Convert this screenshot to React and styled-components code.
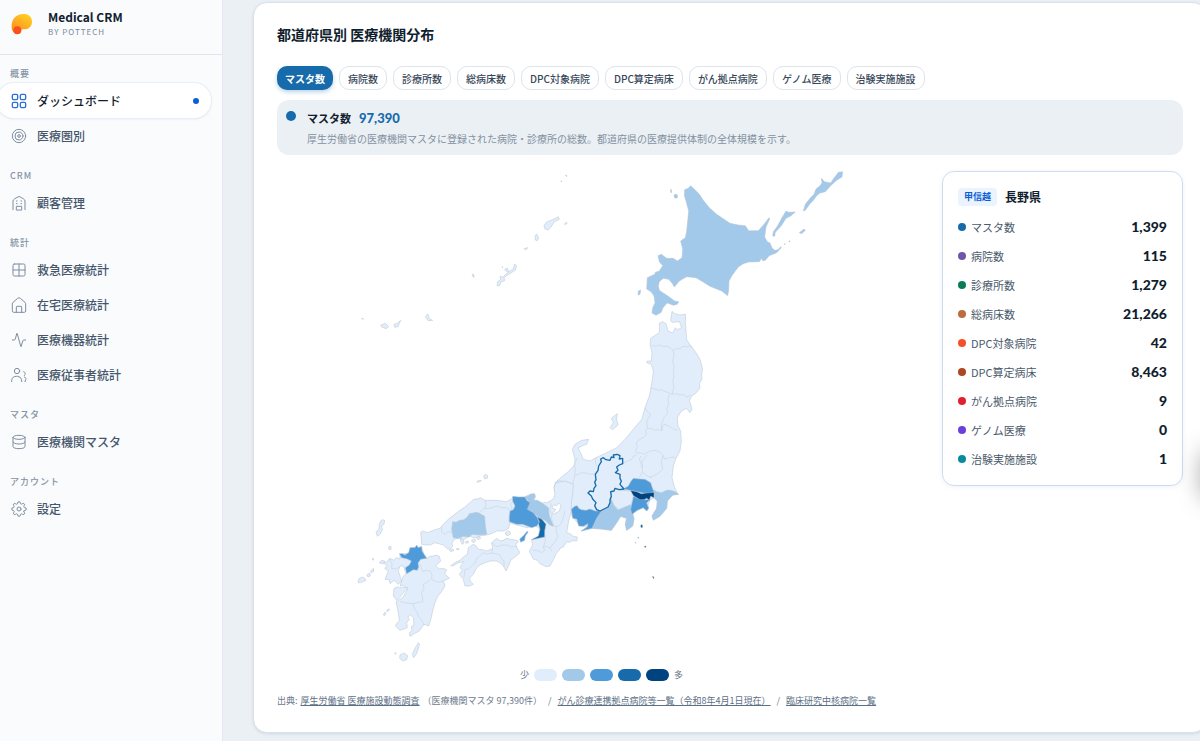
import React, { useState } from 'react'
import styled, { createGlobalStyle } from 'styled-components'
import { Activity, Database, Grid2x2, Target } from 'lucide-react'
import { FiSettings } from 'react-icons/fi'

const levels = ['#e1edfb', '#a3c9ea', '#4f9bda', '#176bab', '#00437f']

const metrics = [
  { name: 'マスタ数', color: '#176bab', value: '1,399' },
  { name: '病院数', color: '#6f56ab', value: '115' },
  { name: '診療所数', color: '#0a7d55', value: '1,279' },
  { name: '総病床数', color: '#bf6b40', value: '21,266' },
  { name: 'DPC対象病院', color: '#f4502a', value: '42' },
  { name: 'DPC算定病床', color: '#ac4722', value: '8,463' },
  { name: 'がん拠点病院', color: '#e01f2f', value: '9' },
  { name: 'ゲノム医療', color: '#6a40d8', value: '0' },
  { name: '治験実施施設', color: '#0b8a9f', value: '1' },
]

// custom icons
const Tiles = () => (
  <svg viewBox='0 0 24 24'>
    <rect x='2' y='2' width='8' height='8' rx='2' />
    <rect x='14' y='2' width='8' height='8' rx='2' />
    <rect x='2' y='14' width='8' height='8' rx='2' />
    <rect x='14' y='14' width='8' height='8' rx='2' />
  </svg>
)
const Home = () => (
  <svg viewBox='0 0 24 24'>
    <path d='M2 10a3 3 0 0 1 1-2l7-6a3 3 0 0 1 4 0l7 6a3 3 0 0 1 1 2v11a2 2 0 0 1-2 2H4a2 2 0 0 1-2-2z' />
    <path d='M8 23v-8a1 1 0 0 1 1-1h6a1 1 0 0 1 1 1v8' />
  </svg>
)
const Building = () => (
  <svg viewBox='0 0 24 24'>
    <path d='M3 22V9a4 4 0 0 1 2-3l5-3a4 4 0 0 1 4 0l5 3a4 4 0 0 1 2 3v13' />
    <path d='M8 22v-5h8v5zM8 9h1M15 9h1M8 13h1M15 13h1' />
  </svg>
)
const People = () => (
  <svg viewBox='0 0 24 24'>
    <circle cx='9' cy='6' r='4' />
    <path d='M1 22v-2a7 7 0 0 1 7-6h2a7 7 0 0 1 6 5v3' />
    <path d='M19 7c3 1 3 4 1 6M20 15c3 1 3 3 2 4l-1 3' />
  </svg>
)

const sections = [
  {
    title: '概要',
    items: [
      { label: 'ダッシュボード', icon: Tiles },
      { label: '医療圏別', icon: Target },
    ],
  },
  { title: 'CRM', items: [{ label: '顧客管理', icon: Building }] },
  {
    title: '統計',
    items: [
      { label: '救急医療統計', icon: Grid2x2 },
      { label: '在宅医療統計', icon: Home },
      { label: '医療機器統計', icon: Activity },
      { label: '医療従事者統計', icon: People },
    ],
  },
  { title: 'マスタ', items: [{ label: '医療機関マスタ', icon: Database }] },
  { title: 'アカウント', items: [{ label: '設定', icon: FiSettings }] },
]

// map sheets: every sheet has its own origin
const hokkaido = [
  '212,74 225,86 238,100 250,118 268,140 290,160 330,187 355,192 376,194 386,209 415,209 432,190 447,170 449,174 438,198 434,228 442,242 450,246 456,260 464,268 474,266 482,257 484,260 470,275 448,284 436,298 428,299 425,292 418,302 386,303 370,308 355,318 337,342 327,360 326,388 323,404 305,390 270,376 248,362 228,350 200,347 178,360 163,378 156,366 146,355 130,352 118,362 115,376 118,388 130,396 148,408 164,420 176,422 172,430 160,433 142,426 134,434 128,442 124,454 108,463 96,456 98,440 105,425 102,405 94,393 80,384 82,350 104,340 106,334 118,330 128,314 118,302 114,284 124,280 140,292 160,292 172,300 186,290 188,265 182,240 196,230 200,210 206,150 198,120 193,104 194,86 205,82',
  '458,225 460,212 472,196 486,170 498,150 506,154 526,153 512,165 498,172 484,194 466,214 464,226',
  '550,150 556,130 570,112 582,100 588,84 600,74 606,66 604,52 614,62 632,66 640,54 655,34 668,32 666,48 650,58 632,74 616,92 600,96 590,104 580,118 570,128 556,148',
  '538,215 552,204 556,208 545,218',
  '506,241 510,239 509,243',
  '492,249 496,248 494,251',
  '152,84 155,90 154,96 152,92',
  '162,102 168,99 173,104 171,111 164,111',
  '55,390 62,387 60,400 54,402',
]

const eastLand = [
  '396,31 404,38 420,42 437,40 436,62 438,90 440,116 455,138 466,152 480,175 484,190 488,205 485,220 486,235 478,248 480,262 466,278 455,285 448,300 452,310 456,325 450,335 440,322 424,330 412,350 414,375 422,390 424,420 420,450 408,472 400,495 396,530 404,560 414,580 398,582 382,600 380,622 360,645 340,656 336,645 350,622 352,600 342,590 330,598 324,612 326,622 320,630 310,620 292,628 276,640 282,655 278,675 260,688 256,670 260,652 242,646 230,665 214,688 185,684 156,682 125,690 142,676 120,675 108,660 96,645 94,625 80,625 64,610 50,590 42,560 46,545 62,530 87,510 105,490 104,470 97,445 105,430 125,418 146,415 140,430 125,435 114,442 122,455 130,475 150,480 168,470 200,455 230,440 255,415 280,385 305,355 315,320 328,285 332,265 338,230 340,210 334,190 320,185 322,180 334,180 336,155 330,130 332,112 358,95 358,66 368,62 378,68 384,90 398,96 406,80 412,86 425,80 418,62 396,64 392,58',
  '214,352 232,338 230,355 234,372 218,386 210,380 220,365',
]

const eastBorders = [
  '334,132 346,136 360,132 372,137 380,135 392,142 400,148 412,142 420,144 428,136 440,138 448,134 458,140',
  '400,148 402,162 398,180 402,196 400,210 402,226 398,240 402,258 396,280',
  '332,262 344,264 355,268 364,266 375,272 384,274 396,280 410,278 420,282 430,280 440,288 452,282',
  '388,280 384,294 386,310 380,322 384,335 372,350 364,370 366,388',
  '315,320 322,332 332,340 320,360 322,382 334,382 345,388 354,386 366,388 366,378 372,370 384,374 392,378 400,384 412,388',
  '322,382 316,390 320,400 310,410 300,415 288,425 292,440 286,448 290,455 302,456 312,460 326,452 340,448 352,450 362,455 370,464 374,475 388,470 400,468 408,472',
  '304,465 298,474 302,485 308,510 298,530',
  '290,460 278,468 274,476 262,480 248,488',
  '308,500 306,480 322,462',
  '368,465 364,484 368,505 356,516 345,522 330,530',
  '308,512 320,524 335,530',
  '168,470 166,484 170,495',
  '112,470 108,480 102,486 106,504 104,525 114,520 125,515 138,516 150,520 166,518',
  '48,545 58,538 70,542 82,544 88,552 98,550 104,525',
  '98,550 94,562 96,575 84,580 75,578 64,610',
]

const westLand = [
  '618,35 645,30 670,40 668,70 664,90 664,120 656,150 650,185 660,188 670,196 682,198 680,210 668,209 658,214 650,212 640,228 630,232 626,240 618,248 612,262 600,285 588,287 570,278 562,268 550,264 545,255 538,240 548,222 545,207 562,202 568,190 568,172 556,164 530,170 500,162 480,155 476,172 462,180 440,180 424,188 410,192 390,195 382,200 370,200 360,196 350,200 340,208 325,202 312,206 306,216 308,226 300,235 290,232 280,222 255,215 240,222 230,222 215,220 213,195 212,184 218,180 232,185 250,178 262,174 270,172 280,160 298,142 330,118 345,108 360,95 372,84 382,84 392,80 405,88 440,88 470,92 490,80 525,78 530,74 550,68 556,78 552,88 562,96 568,92 575,98 582,94 590,95 600,90 610,84 615,70 612,50',
  '302,285 316,274 330,268 340,258 352,250 355,230 370,220 378,224 385,235 398,236 410,240 420,236 428,232 425,215 440,202 450,210 460,208 470,202 480,205 492,206 505,210 498,220 500,228 510,245 490,262 482,268 478,280 468,300 460,285 452,276 440,270 420,270 405,275 390,282 380,290 370,310 358,322 362,332 370,340 358,345 345,345 340,325 328,310 337,298 330,290 340,272 325,275 310,284',
  '200,228 216,232 222,250 232,262 240,256 250,255 258,252 268,256 272,270 258,284 266,294 278,292 290,296 284,308 298,322 288,326 280,330 285,345 276,360 262,378 254,398 248,420 244,440 236,465 222,460 208,480 196,486 180,496 178,486 186,478 184,466 192,462 190,440 180,430 174,440 178,446 170,454 172,470 162,474 150,478 136,465 140,458 148,448 145,425 138,392 160,378 172,355 160,342 150,345 160,315 168,308 160,285 150,285 145,300 155,330 145,340 132,328 120,338 118,326 105,325 115,300 104,292 112,285 100,275 110,272 120,262 132,268 138,260 150,264 150,250 176,246 182,230',
  '132,352 142,348 150,350 160,348 174,350 166,358 152,376 140,388 130,375',
  '92,150 98,146 104,148 102,160 94,166 98,175 90,190 82,196 78,182 86,176 88,160',
  '115,228 122,226 124,234 118,237',
  '24,330 28,322 38,318 44,322 48,328 34,334 26,336',
  '50,312 58,306 62,314 54,318',
  '62,300 70,292 72,300 64,306',
  '88,276 94,268 104,270 100,278',
  '66,264 71,262 70,268',
  '150,552 162,546 173,554 170,566 158,570 149,562',
  '205,515 209,520 200,548 191,560 187,550 196,530',
  '134,546 138,545 137,550',
  '100,432 104,424 108,426 104,434',
  '110,418 117,413 118,418 112,422',
  '380,33 386,28 394,29 388,33',
  '401,14 407,10 413,14 412,22 404,24',
  '332,202 338,204 342,216 336,220 332,210',
  '298,238 308,234 312,238 302,242',
  '318,234 326,232 326,237',
  '346,212 354,210 356,215 348,217',
  '364,208 372,204 378,208 370,216',
  '380,200 388,196 392,202 384,206',
  '465,186 472,180 480,182 482,188 474,194 468,192',
]

const westBorders = [
  '600,95 604,104 598,115 606,128 604,142 612,165 622,166 630,162 636,150 640,140 645,120',
  '620,165 618,180 624,195 614,215 606,222 600,232 606,240',
  '600,232 590,226 580,228 586,212 585,198',
  '580,228 584,238 575,245 560,238 548,238',
  '385,128 396,118 404,112 420,112 440,105 454,110 470,110 480,118',
  '405,88 408,100 404,112',
  '490,90 482,100 486,112 478,128 478,155',
  '275,168 274,182 285,190 296,182 306,185',
  '425,215 434,222 440,228 456,222 470,222 484,228 500,226',
  '428,232 425,246 438,248 450,252 454,262 462,270 462,285',
  '425,246 412,250 400,245 388,256 380,262 376,276 365,285 356,294 345,295 342,320',
  '208,278 214,290 218,302 230,298 240,300 246,310 245,325 264,334 282,330',
  '240,325 232,334 220,340 222,352 214,365 218,380 218,392 204,394 190,398 170,396 150,392',
  '190,398 192,412 202,425 206,438 215,445 222,462',
  '118,264 126,278 125,292 136,294 148,288',
]

const westShaded = [
  {
    level: 1,
    points:
      '308,152 318,154 330,148 342,146 352,138 358,128 370,126 380,124 390,128 404,136 406,165 410,190 385,192 368,190 355,198 340,196 325,202 310,200 305,175',
  },
  {
    level: 2,
    points:
      '148,248 158,248 165,252 176,245 180,230 195,230 200,222 205,230 215,226 216,240 222,250 230,262 212,265 204,276 206,288 202,298 190,296 180,302 170,308 166,290 178,282 184,270 172,264 155,260',
  },
]

const midShaded = [
  {
    level: 1,
    points:
      '276,292 290,265 300,240 318,232 330,215 334,202 340,222 352,236 375,226 392,222 396,240 402,262 398,285 380,298 376,280 380,262 362,256 350,275 334,298 305,294',
  },
  {
    level: 2,
    points:
      '214,235 224,226 232,224 236,232 244,236 258,238 270,234 286,240 304,240 290,262 276,292 258,296 243,300 262,288 264,278 250,286 236,285 230,264 218,262',
  },
  {
    level: 1,
    points:
      '460,176 470,182 485,185 500,178 512,178 525,182 536,190 518,192 502,210 500,232 480,256 460,268 456,255 470,232 472,210 462,200',
  },
  {
    level: 2,
    points:
      '400,196 420,204 434,206 450,206 440,216 446,232 440,240 430,230 412,238 396,250 392,235 396,215',
  },
  {
    level: 2,
    points:
      '370,174 385,165 392,152 400,142 420,144 435,145 452,155 462,185 440,188 410,182 392,178',
  },
  {
    level: 4,
    points:
      '390,178 410,182 424,188 440,186 462,184 462,200 452,196 448,208 440,202 432,206 420,206 400,194',
  },
  {
    level: 1,
    points:
      '75,198 85,195 90,190 104,188 106,196 100,208 112,208 125,215 145,230 148,255 160,286 150,282 135,268 115,258 100,245 82,235 90,215',
  },
  {
    level: 2,
    points:
      '38,196 56,198 75,198 80,208 90,215 82,235 100,245 112,260 118,275 110,285 95,290 68,280 50,280 28,272 28,258 30,240 40,236 45,225 38,210',
  },
  { level: 2, points: '82,300 84,304 76,315 74,328 62,334 59,324 70,314' },
  {
    level: 3,
    points:
      '112,258 126,265 138,280 134,300 134,318 94,326 115,315 120,295 116,280 118,272',
  },
  { level: 4, points: '422,282 427,281 428,289 423,290' },
  { level: 4, points: '434,345 438,345 438,349 434,349' },
  { level: 4, points: '413,320 416,319 416,322' },
  { level: 4, points: '405,335 407,334 407,337' },
  { level: 4, points: '457,436 462,438 462,443 459,441' },
]

const nagano =
  '288,232 284,224 288,215 278,204 274,195 264,186 270,180 280,182 282,172 288,164 284,154 288,146 286,130 294,118 296,105 304,92 302,84 310,80 318,86 330,88 334,78 342,80 340,72 352,70 360,74 358,84 368,82 368,98 358,102 350,108 354,118 346,125 360,130 360,142 364,150 360,160 372,174 358,176 345,172 342,180 332,182 334,196 330,206 330,215 324,228 312,234 300,240 290,236'
const yamanashi =
  '332,190 345,175 370,178 392,180 400,196 394,220 375,228 356,236 342,222 334,204'
const lakeBiwa =
  '176,216 183,224 178,240 160,250 158,246 168,236 156,230 160,222 170,224'

const okinawa = [
  '442,360 442,348 452,340 450,330 458,334 470,322 490,308 494,294 500,300 496,312 478,324 462,334 464,344 452,348 450,358',
  '464,310 472,306 476,316 468,316',
  '456,302 459,303 457,305',
  '582,178 590,168 605,162 625,152 628,160 612,168 604,182 594,192 584,188',
  '643,174 650,168 651,172 646,176',
  '556,208 560,204 566,216 562,224 556,222',
  '522,248 534,245 526,252',
  '646,28 650,27 650,32',
  '632,46 635,44 635,48',
  '366,326 370,324 373,333 370,334',
  '226,452 234,444 238,458 248,463 234,464',
  '92,478 106,472 116,482 108,488 94,482',
  '132,475 142,472 152,463 144,482 134,484',
  '35,458 40,457 40,460',
]

const JapanMap = () => (
  <Map viewBox='831 510 1947 1476' role='img' aria-label='都道府県別マップ'>
    <g transform='translate(1860 480)'>
      {hokkaido.map((p) => (
        <Region key={p} points={p} $level={1} />
      ))}
    </g>
    <g transform='translate(1620 900)'>
      {eastLand.map((p) => (
        <Region key={p} points={p} $level={0} />
      ))}
      {eastBorders.map((p) => (
        <Border key={p} points={p} />
      ))}
    </g>
    <g transform='translate(1050 1410)'>
      {westLand.map((p) => (
        <Region key={p} points={p} $level={0} />
      ))}
      {westBorders.map((p) => (
        <Border key={p} points={p} />
      ))}
      {westShaded.map((r) => (
        <Region key={r.points} points={r.points} $level={r.level} />
      ))}
    </g>
    <g transform='translate(1500 1290)'>
      {midShaded.map((r) => (
        <Region key={r.points} points={r.points} $level={r.level} />
      ))}
      <Region points={yamanashi} $level={0} />
      <Lake points={lakeBiwa} />
      <Selected points={nagano} />
    </g>
    <g transform='translate(1050 495)'>
      {okinawa.map((p) => (
        <Region key={p} points={p} $level={0} />
      ))}
    </g>
  </Map>
)

export default function App() {
  const [page, setPage] = useState('ダッシュボード')
  const [metric, setMetric] = useState('マスタ数')

  return (
    <Shell>
      <GlobalStyle />
      <Sidebar>
        <Brand>
          <svg viewBox='0 0 66 66'>
            <defs>
              <linearGradient id='brand' x1='0.8' y1='0' x2='0.2' y2='1'>
                <stop offset='0' stopColor='#ffd024' />
                <stop offset='1' stopColor='#ff8a1f' />
              </linearGradient>
            </defs>
            <path
              d='M2 44C0 20 14 3 38 3c14 0 25 8 25 23 0 14-10 23-25 23-4 0-6-1-8 2-2 8-8 12-14 10-8-2-14-8-14-17z'
              fill='url(#brand)'
            />
            <circle cx='19' cy='52' r='12' fill='#f9501c' />
          </svg>
          <div>
            <h1>Medical CRM</h1>
            <p>BY POTTECH</p>
          </div>
        </Brand>
        <Nav>
          {sections.map((s) => (
            <Section key={s.title}>
              <h2>{s.title}</h2>
              {s.items.map((item) => (
                <NavLink
                  key={item.label}
                  href='#'
                  $active={item.label == page}
                  onClick={() => setPage(item.label)}
                >
                  <item.icon />
                  <span>{item.label}</span>
                </NavLink>
              ))}
            </Section>
          ))}
        </Nav>
      </Sidebar>
      <Main>
        <Panel>
          <Title>都道府県別 医療機関分布</Title>
          <Tabs>
            {metrics.map((m) => (
              <Tab
                key={m.name}
                $active={m.name == metric}
                onClick={() => setMetric(m.name)}
              >
                {m.name}
              </Tab>
            ))}
          </Tabs>
          <Summary>
            <Dot $color='#176bab' $size={10} />
            <div>
              <h3>
                マスタ数 <strong>97,390</strong>
              </h3>
              <p>
                厚生労働省の医療機関マスタに登録された病院・診療所の総数。都道府県の医療提供体制の全体規模を示す。
              </p>
            </div>
          </Summary>
          <Content>
            <div>
              <JapanMap />
              <Legend>
                <span>少</span>
                {levels.map((c) => (
                  <Swatch key={c} $color={c} />
                ))}
                <span>多</span>
              </Legend>
            </div>
            <Detail>
              <header>
                <Tag>甲信越</Tag>
                <h3>長野県</h3>
              </header>
              <dl>
                {metrics.map((m) => (
                  <Row key={m.name}>
                    <Dot $color={m.color} $size={8} />
                    <dt>{m.name}</dt>
                    <dd>{m.value}</dd>
                  </Row>
                ))}
              </dl>
            </Detail>
          </Content>
          <Source>
            <span>出典:</span>
            <a href='#'>厚生労働省 医療施設動態調査</a>
            <span>（医療機関マスタ 97,390件）</span>
            <Slash>/</Slash>
            <a href='#'>がん診療連携拠点病院等一覧（令和8年4月1日現在）</a>
            <Slash>/</Slash>
            <a href='#'>臨床研究中核病院一覧</a>
          </Source>
        </Panel>
      </Main>
      <SideHandle />
    </Shell>
  )
}

const GlobalStyle = createGlobalStyle`
  * {
    box-sizing: border-box;
  }
  body {
    margin: 0;
    background-color: #ebf0f5;
    color: #111e2e;
    font-family: 'Noto Sans CJK JP', sans-serif;
    font-size: 12px;
  }
  h1, h2, h3, p, dl, dd {
    margin: 0;
  }
`
const Shell = styled.div`
  min-height: 100vh;
  display: flex;
  overflow: hidden;
`
const Sidebar = styled.aside`
  width: 223px;
  flex-shrink: 0;
  background-color: #f9fbfd;
  border-right: 1px solid #e3e9f0;
`
const Brand = styled.div`
  height: 55px;
  padding: 8px 11px;
  display: flex;
  gap: 15px;
  border-bottom: 1px solid #dfe6ee;
  svg {
    width: 22px;
    height: 22px;
    margin-top: 5px;
  }
  h1 {
    font-size: 12px;
    line-height: 18px;
    font-weight: 700;
  }
  p {
    font-size: 8px;
    line-height: 12px;
    letter-spacing: 1px;
    color: #7b8a9c;
  }
`
const Nav = styled.nav`
  padding: 12px 11px 0 0;
`
const Section = styled.section`
  & + & {
    padding-top: 16px;
  }
  h2 {
    padding-left: 10px;
    margin-bottom: 2px;
    font-size: 9px;
    line-height: 14px;
    font-weight: 500;
    letter-spacing: 1px;
    color: #8593a4;
  }
`
const NavLink = styled.a`
  height: 35px;
  margin-left: -3px;
  padding: 0 12px 0 14px;
  display: flex;
  align-items: center;
  gap: 10px;
  border-radius: 17px;
  text-decoration: none;
  font-weight: 500;
  color: ${(p) => (p.$active ? '#111e2e' : '#46566a')};
  background-color: ${(p) => (p.$active ? '#fff' : 'transparent')};
  box-shadow: ${(p) =>
    p.$active ? '0 0 0 1px #e9eef4, 0 1px 3px rgba(30, 60, 90, 0.1)' : 'none'};
  svg {
    width: 16px;
    height: 16px;
    fill: none;
    stroke: ${(p) => (p.$active ? '#2a6fdb' : '#7f8ea0')};
    stroke-width: ${(p) => (p.$active ? 2 : 1.5)};
    stroke-linecap: round;
    stroke-linejoin: round;
  }
  &::after {
    content: '';
    display: ${(p) => (p.$active ? 'block' : 'none')};
    width: 6px;
    height: 6px;
    margin-left: auto;
    border-radius: 50%;
    background-color: #0a5fd6;
  }
`
const Main = styled.main`
  flex: 1;
  min-width: 0;
  margin-right: -7px;
  padding: 2px 0 9px 30px;
`
const Panel = styled.div`
  padding: 21px 23px 23px;
  background-color: #fff;
  border: 1px solid #d9e2ec;
  border-radius: 14px;
  box-shadow: 0 1px 3px rgba(30, 60, 90, 0.12);
`
const Title = styled.h2`
  margin-bottom: 22px;
  font-size: 14px;
  line-height: 20px;
  font-weight: 700;
`
const Tabs = styled.div`
  display: flex;
  flex-wrap: wrap;
  gap: 6px;
  margin-bottom: 10px;
`
const Tab = styled.button`
  height: 24px;
  padding: 0 8px;
  border: ${(p) => (p.$active ? 'none' : '1px solid #dde4ec')};
  border-radius: 10px;
  background-color: ${(p) => (p.$active ? '#176bab' : '#fff')};
  box-shadow: ${(p) =>
    p.$active ? '0 2px 4px rgba(23, 107, 171, 0.3)' : 'none'};
  color: ${(p) => (p.$active ? '#fff' : '#37475a')};
  font-family: inherit;
  font-size: 10px;
  font-weight: ${(p) => (p.$active ? 700 : 500)};
  cursor: pointer;
`
const Dot = styled.span`
  width: ${(p) => p.$size}px;
  height: ${(p) => p.$size}px;
  flex-shrink: 0;
  border-radius: 50%;
  background-color: ${(p) => p.$color};
`
const Summary = styled.div`
  display: flex;
  gap: 11px;
  margin-bottom: 16px;
  padding: 9px 9px 8px;
  border-radius: 12px;
  background-color: #ebf0f5;
  ${Dot} {
    margin-top: 2px;
  }
  h3 {
    display: flex;
    gap: 8px;
    margin-bottom: 3px;
    font-size: 11px;
    line-height: 18px;
  }
  strong {
    font-family: Lato, sans-serif;
    font-size: 13px;
    color: #176bab;
  }
  p {
    font-size: 10px;
    line-height: 17px;
    color: #8391a1;
  }
`
const Content = styled.div`
  display: grid;
  grid-template-columns: minmax(0, 1fr) 241px;
  gap: 16px;
  align-items: start;
`
const Map = styled.svg`
  display: block;
  width: 100%;
`
const Region = styled.polygon`
  fill: ${(p) => levels[p.$level]};
  stroke: #b7c2d1;
  stroke-width: 1.5;
  stroke-linejoin: round;
`
const Border = styled.polyline`
  fill: none;
  stroke: #c3cddb;
  stroke-width: 1.5;
`
const Lake = styled.polygon`
  fill: #fff;
  stroke: #b7c2d1;
  stroke-width: 1.5;
`
const Selected = styled.polygon`
  fill: #e1edfb;
  stroke: #176bab;
  stroke-width: 4;
  stroke-linejoin: round;
`
const Legend = styled.div`
  display: flex;
  justify-content: center;
  align-items: center;
  gap: 5px;
  margin-top: 5px;
  font-size: 9px;
  line-height: 14px;
  color: #6c7b8d;
`
const Swatch = styled.span`
  width: 23px;
  height: 12px;
  border-radius: 6px;
  background-color: ${(p) => p.$color};
`
const Detail = styled.section`
  padding: 15px 15px 12px;
  border: 1px solid #cfdcf0;
  border-radius: 12px;
  box-shadow: 0 1px 4px rgba(30, 80, 160, 0.08);
  header {
    height: 20px;
    margin-bottom: 5px;
    display: flex;
    align-items: center;
    gap: 8px;
  }
  h3 {
    font-size: 12px;
    line-height: 18px;
  }
`
const Tag = styled.span`
  padding: 0 6px;
  border-radius: 4px;
  background-color: #ebf3fd;
  color: #0a5fd6;
  font-size: 9px;
  line-height: 18px;
  font-weight: 700;
`
const Row = styled.div`
  height: 29px;
  display: flex;
  align-items: center;
  gap: 5px;
  font-size: 11px;
  color: #4a596b;
  dd {
    margin-left: auto;
    font-family: Lato, sans-serif;
    font-size: 14px;
    font-weight: 900;
    color: #111e2e;
  }
`
const Source = styled.p`
  display: flex;
  flex-wrap: wrap;
  gap: 3px;
  margin-top: 11px;
  font-size: 9px;
  line-height: 16px;
  color: #6c7b8d;
  a {
    color: #5b6f86;
  }
`
const Slash = styled.span`
  margin: 0 3px;
`
const SideHandle = styled.div`
  position: fixed;
  top: 450px;
  right: -40px;
  width: 38px;
  height: 50px;
  border-radius: 12px;
  box-shadow: 0 0 24px rgba(0, 0, 0, 0.35);
`
